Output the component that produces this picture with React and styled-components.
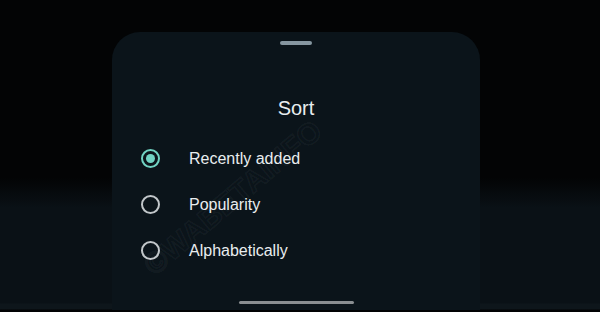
import styled, { createGlobalStyle } from "styled-components";

const GlobalStyle = createGlobalStyle`
	html, body {
		margin: 0;
		padding: 0;
		background: #030405;
	}
	* {
		box-sizing: border-box;
	}
`;

const options = [
	{ id: "recent", label: "Recently added", checked: true },
	{ id: "popular", label: "Popularity", checked: false },
	{ id: "alpha", label: "Alphabetically", checked: false },
];

const App = () => {
	return (
		<>
			<GlobalStyle />
			<S.Screen>
				<S.Sheet>
					<S.Handle />
					<S.Title>Sort</S.Title>
					<S.OptionList>
						{options.map((opt) => (
							<S.OptionRow key={opt.id}>
								<S.Radio $checked={opt.checked} />
								<S.OptionLabel>{opt.label}</S.OptionLabel>
							</S.OptionRow>
						))}
					</S.OptionList>
					<S.Watermark>©WABETAINFO</S.Watermark>
					<S.HomeBar />
				</S.Sheet>
			</S.Screen>
		</>
	);
};
export default App;

const Screen = styled.div`
	width: 600px;
	height: 312px;
	display: flex;
	justify-content: center;
	padding-top: 32px;
	padding-right: 8px;
	overflow: hidden;
	background: linear-gradient(
		to bottom,
		#030405 0px,
		#030405 178px,
		#0a1116 208px,
		#0a1116 303px,
		#0e161b 304px,
		#0e161b 309px,
		#020304 310px
	);
	font-family: "Liberation Sans", Arial, sans-serif;
`;

const Sheet = styled.div`
	position: relative;
	width: 368px;
	height: 278px;
	background: #0b141a;
	border-radius: 28px 28px 0 0;
	display: flex;
	flex-direction: column;
	align-items: center;
	padding-top: 9px;
	overflow: hidden;
`;

const Handle = styled.div`
	width: 32px;
	height: 4px;
	border-radius: 2px;
	background: #8696a0;
`;

const Title = styled.div`
	margin-top: 51px;
	font-size: 20px;
	line-height: 24px;
	color: #e9edef;
`;

const OptionList = styled.div`
	align-self: stretch;
	display: flex;
	flex-direction: column;
	gap: 24px;
	margin-top: 27px;
	padding-left: 29px;
`;

const OptionRow = styled.div`
	height: 22px;
	display: flex;
	align-items: center;
`;

const Radio = styled.div`
	flex-shrink: 0;
	width: 19px;
	height: 19px;
	border-radius: 50%;
	border: 2px solid ${(p) => (p.$checked ? "#71d3c3" : "#c2c7ca")};
	display: flex;
	align-items: center;
	justify-content: center;
	&::after {
		content: "";
		display: ${(p) => (p.$checked ? "block" : "none")};
		width: 9px;
		height: 9px;
		border-radius: 50%;
		background: #71d3c3;
	}
`;

const OptionLabel = styled.div`
	margin-left: 29px;
	padding-top: 2px;
	font-size: 16px;
	color: #e9edef;
`;

const Watermark = styled.div`
	position: absolute;
	left: 36px;
	top: 222px;
	line-height: 30px;
	white-space: nowrap;
	transform: rotate(-40deg);
	transform-origin: left center;
	font-size: 30px;
	font-weight: 900;
	letter-spacing: 0px;
	color: rgba(255, 255, 255, 0.025);
	-webkit-text-stroke: 1.5px rgba(255, 255, 255, 0.05);
	pointer-events: none;
`;

const HomeBar = styled.div`
	position: absolute;
	bottom: 6px;
	left: 127px;
	width: 115px;
	height: 3px;
	border-radius: 2px;
	background: #8a8e91;
`;

const S = {
	Screen,
	Sheet,
	Handle,
	Title,
	OptionList,
	OptionRow,
	Radio,
	OptionLabel,
	Watermark,
	HomeBar,
};
